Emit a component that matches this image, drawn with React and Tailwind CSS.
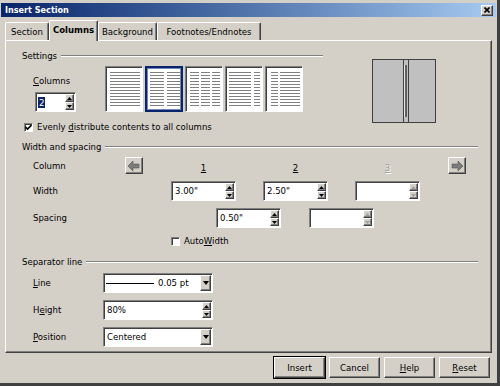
import React from "react";

const raised =
  "bg-[#d4d0c8] border border-t-white border-l-white border-r-[#404040] border-b-[#404040] shadow-[inset_-1px_-1px_0_#808080]";
const sunken =
  "border border-t-[#808080] border-l-[#808080] border-r-white border-b-white shadow-[inset_1px_1px_0_#404040]";

function Tri({ dir = "down", disabled }) {
  const fill = disabled ? "#a0a0a0" : "#000";
  return (
    <svg width="5" height="3" viewBox="0 0 5 3">
      <polygon points={dir === "up" ? "2.5,0 5,3 0,3" : "0,0 5,0 2.5,3"} fill={fill} />
    </svg>
  );
}

function SpinButtons({ disabled }) {
  return (
    <div className="flex flex-col w-[9px] my-[1px] mr-[1px]">
      <div className={`${raised} flex-1 flex items-center justify-center`}>
        <Tri dir="up" disabled={disabled} />
      </div>
      <div className={`${raised} flex-1 flex items-center justify-center`}>
        <Tri disabled={disabled} />
      </div>
    </div>
  );
}

function SpinField({ value, width = "w-[65px]", disabled }) {
  return (
    <div className={`${sunken} bg-white flex h-[20px] ${width}`}>
      <div className="flex-1 flex items-center pl-[3px]">{value}</div>
      <SpinButtons disabled={disabled} />
    </div>
  );
}

function DropButton() {
  return (
    <div className={`${raised} w-[11px] my-[1px] mr-[1px] flex items-center justify-center`}>
      <svg width="6" height="4" viewBox="0 0 6 4">
        <polygon points="0,0 6,0 3,4" fill="#000" />
      </svg>
    </div>
  );
}

function Check({ checked }) {
  return (
    <div className={`${sunken} bg-white w-[9px] h-[9px] flex items-center justify-center`}>
      {checked && (
        <svg width="7" height="7" viewBox="0 0 7 7">
          <path d="M0.5 3 L2.5 5 L6.5 1" stroke="#000" strokeWidth="1.6" fill="none" />
        </svg>
      )}
    </div>
  );
}

function GroupHeader({ title, width }) {
  return (
    <div className={`flex items-center h-[12px] ${width}`}>
      <span className="ml-[16px] mr-[4px]">{title}</span>
      <div className="flex-1 h-[2px] border-t border-t-[#808080] border-b border-b-white" />
    </div>
  );
}

const PRESETS = [
  [[4, 34]],
  [[4, 18], [21, 34]],
  [[4, 13], [15, 24], [26, 34]],
  [[3, 25], [28, 34]],
  [[5, 12], [14, 34]],
];

function Preset({ cols, selected }) {
  const lines = [];
  for (let i = 0; i < 12; i++) {
    cols.forEach(([a, b]) =>
      lines.push(<rect key={`${i}-${a}`} x={a} y={5 + i * 3} width={b - a} height="1" fill="#808080" />)
    );
  }
  return (
    <div
      className={`w-[38px] h-[46px] bg-white ${
        selected ? "border-2 border-[#0a246a] shadow-[inset_0_0_0_1px_#6f87c0]" : sunken
      }`}
    >
      <svg width="36" height="44" viewBox="0 0 36 44" className={selected ? "-ml-px -mt-px" : ""}>
        {lines}
      </svg>
    </div>
  );
}

function Preview() {
  return (
    <svg width="64" height="64" viewBox="0 0 64 64">
      <rect x="0.5" y="0.5" width="63" height="63" fill="#c0c0c0" stroke="#404040" />
      <line x1="31.5" y1="0" x2="31.5" y2="64" stroke="#404040" />
      <line x1="36.5" y1="0" x2="36.5" y2="64" stroke="#404040" />
      <rect x="33" y="6" width="2" height="52" fill="#606060" />
      <line x1="32.5" y1="6" x2="32.5" y2="58" stroke="#e8e8e8" />
    </svg>
  );
}

function ArrowButton({ right }) {
  return (
    <div className={`${raised} w-[18px] h-[17px] flex items-center justify-center`}>
      <svg width="12" height="10" viewBox="0 0 12 10">
        <polygon
          points={right ? "12,5 7,0 7,3 1,3 1,7 7,7 7,10" : "0,5 5,0 5,3 11,3 11,7 5,7 5,10"}
          fill="#7c7c7c"
          stroke="#505050"
          strokeWidth="0.6"
        />
      </svg>
    </div>
  );
}

function Tab({ children, selected, width }) {
  return (
    <div
      className={`${width} flex items-center justify-center border-t border-l border-t-white border-l-white border-r border-r-[#404040] rounded-t-[2px] shadow-[inset_-1px_0_0_#808080] ${
        selected ? "h-[21px] -mb-px relative z-10 bg-[#d4d0c8] font-bold pb-[2px]" : "h-[18px]"
      }`}
    >
      {children}
    </div>
  );
}

export default function App() {
  return (
    <div className="w-[500px] h-[386px] bg-[#d4d0c8] border-r-[3px] border-b-[3px] border-r-[#404040] border-b-[#404040] flex flex-col font-['DejaVu_Sans_Condensed','DejaVu_Sans',sans-serif] text-[9.5px] leading-[12px] text-black overflow-hidden">
      {/* title bar */}
      <div className="ml-px mt-[3px] w-[495px] h-[14px] bg-gradient-to-r from-[#0a246a] to-[#a6caf0] flex items-center">
        <span className="ml-[4px] text-white font-bold text-[9px]">Insert Section</span>
        <div className={`${raised} ml-auto mr-[3px] w-[12px] h-[11px] flex items-center justify-center`}>
          <svg width="6" height="6" viewBox="0 0 6 6">
            <path d="M0.5 0.5 L5.5 5.5 M5.5 0.5 L0.5 5.5" stroke="#000" strokeWidth="1.6" />
          </svg>
        </div>
      </div>

      {/* tabs */}
      <div className="mt-[3px] ml-[5px] h-[20px] flex items-end">
        <Tab width="w-[44px]">Section</Tab>
        <Tab width="w-[49px]" selected>
          Columns
        </Tab>
        <Tab width="w-[59px]">Background</Tab>
        <Tab width="w-[104px]">Footnotes/Endnotes</Tab>
      </div>

      {/* panel */}
      <div className="ml-[5px] w-[487px] h-[313px] border border-t-white border-l-white border-r-[#404040] border-b-[#404040] shadow-[inset_-1px_-1px_0_#808080] flex flex-col">
        {/* Settings */}
        <div className="flex mt-[9px]">
          <div className="w-[317px] flex flex-col">
            <GroupHeader title="Settings" width="w-[317px]" />
            <div className="flex mt-[4px] h-[46px]">
              <div className="ml-[27px] w-[43px] flex flex-col">
                <span className="mt-[9px] h-[12px]">
                  <u>C</u>olumns
                </span>
                <div className={`${sunken} bg-white flex h-[20px] w-[41px] mt-[5px] ml-[2px]`}>
                  <div className="flex-1 flex items-center pl-[2px]">
                    <span className="bg-[#0a246a] text-white px-px leading-[11px]">2</span>
                  </div>
                  <SpinButtons />
                </div>
              </div>
              <div className="ml-[29px] flex gap-[2px]">
                {PRESETS.map((p, i) => (
                  <Preset key={i} cols={p} selected={i === 1} />
                ))}
              </div>
            </div>
            <div className="flex items-center mt-[9px] h-[12px]">
              <div className="ml-[18px]">
                <Check checked />
              </div>
              <span className="ml-[4px]">
                Evenly <u>d</u>istribute contents to all columns
              </span>
            </div>
          </div>
          <div className="ml-[49px] mt-[9px]">
            <Preview />
          </div>
        </div>

        {/* Width and spacing */}
        <div className="mt-[8px]">
          <GroupHeader title="Width and spacing" width="w-[472px]" />
        </div>
        <div className="flex items-center mt-[4px] h-[17px]">
          <span className="ml-[27px] w-[92px]">Column</span>
          <ArrowButton />
          <span className="ml-[28px] w-[65px] text-center mt-[4px]">
            <u>1</u>
          </span>
          <span className="ml-[27px] w-[65px] text-center mt-[4px]">
            <u>2</u>
          </span>
          <span className="ml-[27px] w-[65px] text-center mt-[4px] text-[#9a9a9a] [text-shadow:1px_1px_0_#fff]">
            <u>3</u>
          </span>
          <div className="ml-[28px]">
            <ArrowButton right />
          </div>
        </div>
        <div className="flex items-center mt-[7px] h-[20px]">
          <span className="ml-[27px] w-[138px]">Width</span>
          <SpinField value='3.00"' />
          <div className="ml-[27px]">
            <SpinField value='2.50"' />
          </div>
          <div className="ml-[27px]">
            <SpinField value="" disabled />
          </div>
        </div>
        <div className="flex items-center mt-[7px] h-[20px]">
          <span className="ml-[27px] w-[183px]">Spacing</span>
          <SpinField value='0.50"' />
          <div className="ml-[28px]">
            <SpinField value="" disabled />
          </div>
        </div>
        <div className="flex items-center mt-[7px] h-[12px]">
          <div className="ml-[165px]">
            <Check />
          </div>
          <span className="ml-[4px]">
            Auto<u>W</u>idth
          </span>
        </div>

        {/* Separator line */}
        <div className="mt-[9px]">
          <GroupHeader title="Separator line" width="w-[472px]" />
        </div>
        <div className="flex items-center mt-[5px] h-[20px]">
          <span className="ml-[27px] w-[70px]">
            <u>L</u>ine
          </span>
          <div className={`${sunken} bg-white flex h-[20px] w-[110px]`}>
            <div className="flex-1 flex items-center pl-[2px]">
              <div className="w-[48px] h-px bg-black" />
              <span className="ml-[4px]">0.05 pt</span>
            </div>
            <DropButton />
          </div>
        </div>
        <div className="flex items-center mt-[7px] h-[20px]">
          <span className="ml-[27px] w-[70px]">
            H<u>e</u>ight
          </span>
          <SpinField value="80%" width="w-[110px]" />
        </div>
        <div className="flex items-center mt-[7px] h-[20px]">
          <span className="ml-[27px] w-[70px]">
            <u>P</u>osition
          </span>
          <div className={`${sunken} bg-white flex h-[20px] w-[110px]`}>
            <div className="flex-1 flex items-center pl-[3px]">Centered</div>
            <DropButton />
          </div>
        </div>
      </div>

      {/* buttons */}
      <div className="mt-[4px] flex justify-end gap-[4px] pr-[7px]">
        <div className={`${raised} w-[51px] h-[21px] flex items-center justify-center ring-1 ring-black`}>Insert</div>
        <div className={`${raised} w-[51px] h-[21px] flex items-center justify-center`}>Cancel</div>
        <div className={`${raised} w-[51px] h-[21px] flex items-center justify-center`}>
          <u>H</u>elp
        </div>
        <div className={`${raised} w-[51px] h-[21px] flex items-center justify-center`}>
          <u>R</u>eset
        </div>
      </div>
    </div>
  );
}
